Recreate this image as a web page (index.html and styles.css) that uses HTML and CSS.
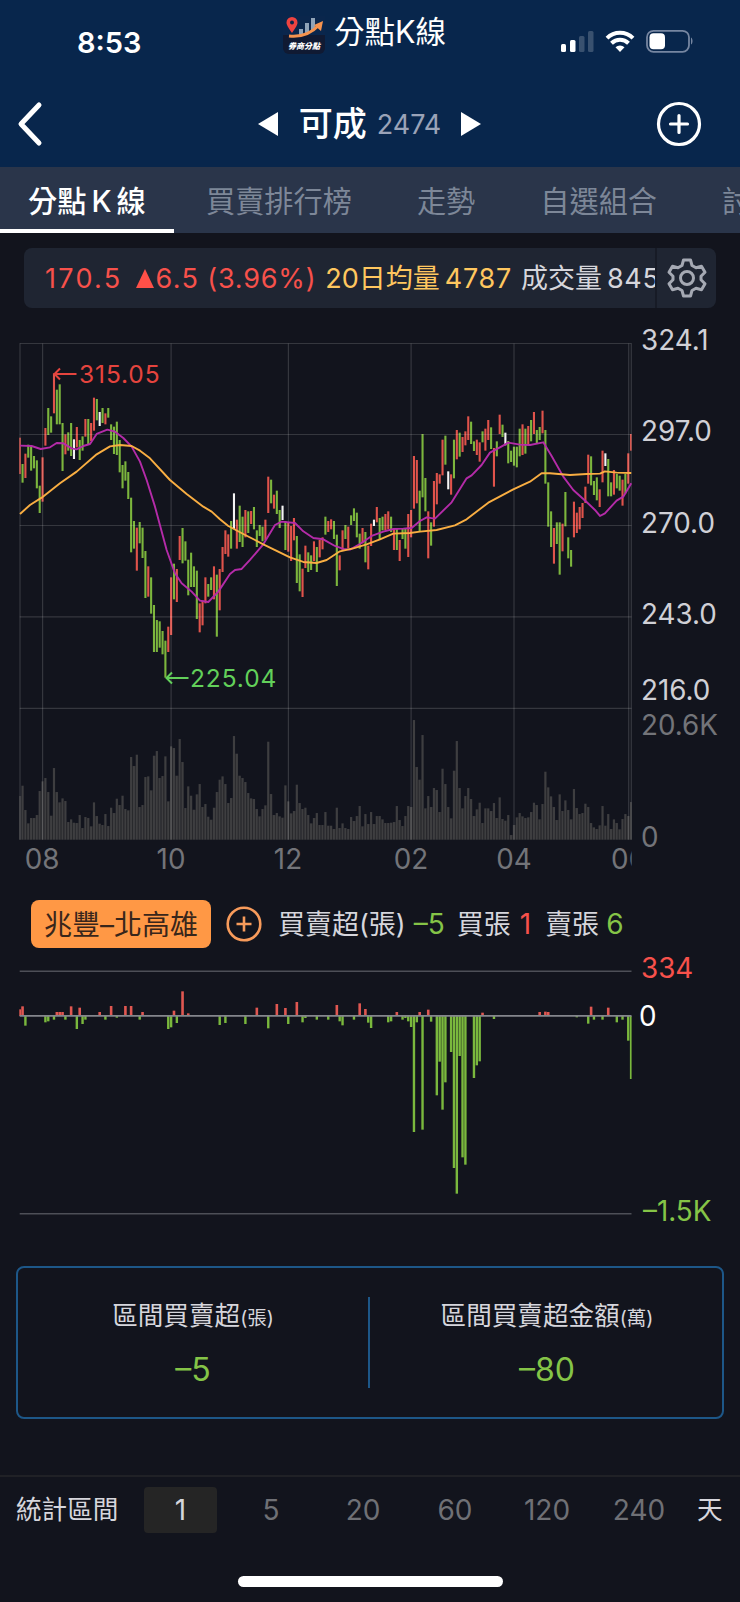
FILE: index.html
```html
<!DOCTYPE html>
<html lang="zh-Hant">
<head>
  <meta charset="UTF-8" />
  <meta name="viewport" content="width=device-width, initial-scale=1.0" />
  <title>分點K線 - 可成 2474</title>
  <link rel="stylesheet" href="styles.css">
</head>
<body>
  <header class="header">
    <div class="status">
      <span class="time">8:53</span>
      <div class="app">
        <svg class="app-icon" width="42" height="38" viewBox="0 0 42 38">
          <rect y="1" width="42" height="37" rx="6" fill="#101a33"/>
          <rect width="42" height="19" fill="#0a264c"/>
          <path d="M16 19v-6h4v6M22 18V7h4v10M28 15V2h4v10" fill="#8fa3b8"/>
          <path d="M9 17C5 11 3.5 9 3.5 6.5a5.5 5.5 0 0 1 11 0C14.5 9 13 11 9 17z" fill="#ee4340"/>
          <circle cx="9" cy="6.5" r="2" fill="#0a264c"/>
          <path d="M6 20Q24 22 36 9" fill="none" stroke="#f6934e" stroke-width="3"/>
          <path d="M31 9l9-4-2 10z" fill="#f6934e"/>
          <text x="21" y="33" class="icon-text">券商分點</text>
        </svg>
        <span class="app-name">分點K線</span>
      </div>
      <svg class="status-icons" width="134" height="26" viewBox="0 0 134 26">
        <g fill="#fff">
          <rect x="1" y="15" width="5" height="8" rx="1.5"/>
          <rect x="10" y="11" width="5.5" height="12" rx="1.5"/>
          <rect x="19" y="7" width="5.5" height="16" rx="1.5" opacity=".2"/>
          <rect x="28" y="2" width="5.5" height="21" rx="1.5" opacity=".2"/>
          <path d="M60 23l-4.5-4.7a6.5 6.5 0 0 1 9 0z"/>
        </g>
        <g fill="none" stroke="#fff" stroke-width="4">
          <path d="M47 9.2a18.5 18.5 0 0 1 26 0M51.5 14.3a12.2 12.2 0 0 1 17 0"/>
        </g>
        <rect x="87" y="1.8" width="42" height="21" rx="6.5" fill="none" stroke="#7686a1" stroke-width="1.8"/>
        <rect x="89.5" y="4.3" width="15.5" height="16" rx="4" fill="#fff"/>
        <path d="M131 8.5c2 1 2 6 0 7z" fill="#7686a1"/>
      </svg>
    </div>
    <div class="nav">
      <svg width="28" height="46" viewBox="0 0 28 46" class="back"><path d="M23 4L5 23l18 19"/></svg>
      <div class="stock">
        <svg width="20" height="24" viewBox="0 0 20 24"><path d="M20 0v24L0 12z" fill="#fff"/></svg>
        <span class="stock-name">可成</span>
        <span class="stock-code">2474</span>
        <svg width="20" height="24" viewBox="0 0 20 24"><path d="M0 0v24l20-12z" fill="#fff"/></svg>
      </div>
      <svg width="46" height="46" viewBox="0 0 46 46" class="add"><circle cx="23" cy="23" r="20.5"/><path d="M23 14.5v17M14.5 23h17"/></svg>
    </div>
  </header>

  <nav class="tabs">
    <span class="tab active">分點<i>K</i>線</span>
    <span class="tab">買賣排行榜</span>
    <span class="tab">走勢</span>
    <span class="tab">自選組合</span>
    <span class="tab">討論</span>
  </nav>

  <div class="quote">
    <div class="quote-text">
      <span class="red price">170.5</span>
      <svg class="up" width="18" height="19" viewBox="0 0 18 19"><path d="M9 0l9 19H0z" fill="#ff5048"/></svg>
      <span class="red change">6.5</span>
      <span class="red percent">(3.96%)</span>
      <span class="yellow average">20日均量</span>
      <span class="yellow average-num">4787</span>
      <span class="deal">成交量</span>
      <span class="deal-num">8451</span>
    </div>
    <div class="gear">
      <svg width="42" height="42" viewBox="-21 -21 42 42">
        <path d="M-3.5-18h7l1.500 5.500 4 2.300 5.500-1.500 3.500 6-4 4v3.400l4 4-3.500 6-5.500-1.500-4 2.300-1.500 5.500h-7l-1.500-5.500-4-2.300-5.500 1.500-3.500-6 4-4v-3.400l-4-4 3.500-6 5.500 1.500 4-2.300z"/>
        <circle r="6.5"/>
      </svg>
    </div>
  </div>

  <svg id="kChart" class="k-chart" width="740" height="550" viewBox="0 330 740 550"></svg>

  <div class="broker">
    <span class="broker-tag">兆豐–北高雄</span>
    <svg class="broker-add" width="36" height="36" viewBox="0 0 36 36"><circle cx="18" cy="18" r="16.3"/><path d="M18 10.5v15M10.5 18h15"/></svg>
    <span class="net">買賣超(張)</span>
    <span class="net-num green">–5</span>
    <span class="buy">買張</span>
    <span class="buy-num red">1</span>
    <span class="sell">賣張</span>
    <span class="sell-num green">6</span>
  </div>

  <svg id="netChart" class="net-chart" width="740" height="290" viewBox="0 950 740 290"></svg>

  <section class="summary">
    <div class="summary-item">
      <p>區間買賣超<small>(張)</small></p>
      <strong>–5</strong>
    </div>
    <div class="summary-item">
      <p>區間買賣超金額<small>(萬)</small></p>
      <strong>–80</strong>
    </div>
  </section>

  <footer class="footer">
    <div class="range">
      <span class="range-label">統計區間</span>
      <span class="day selected">1</span>
      <span class="day">5</span>
      <span class="day">20</span>
      <span class="day">60</span>
      <span class="day">120</span>
      <span class="day">240</span>
      <span class="range-unit">天</span>
    </div>
    <div class="home-bar"></div>
  </footer>

  <script src="chart.js"></script>
</body>
</html>
```
FILE: styles.css
```css
* { box-sizing: border-box; }
body { margin: 0; width: 740px; height: 1602px; overflow: hidden; background: #12141d; color: #d6d6dc; font-family: Inter, "Noto Sans CJK TC", sans-serif; font-size: 27px; line-height: 1; display: flex; flex-direction: column; white-space: nowrap; }
svg { display: block; flex-shrink: 0; }
.red { color: #f7514b; }
.green { color: #85c447; }
.yellow { color: #ffc75f; }

/* header */
.header { height: 167px; flex-shrink: 0; background: #08264c; color: #fff; }
.status { height: 84px; display: flex; align-items: flex-start; }
.time { width: 206px; margin-left: 77px; padding-top: 28px; font-size: 29px; font-weight: 600; }
.app { width: 277px; display: flex; padding-top: 16px; gap: 9px; }
.app-name { font-size: 30.5px; line-height: 32px; }
.icon-text { font-size: 8px; font-weight: 900; font-style: italic; fill: #fff; text-anchor: middle; }
.status-icons { margin-top: 29px; }
.nav { height: 80px; display: flex; align-items: center; justify-content: space-between; padding: 0 38px 0 16px; }
.back, .add { fill: none; stroke: #fff; stroke-width: 5; stroke-linecap: round; stroke-linejoin: round; }
.add { stroke-width: 3.2; }
.stock { display: flex; align-items: center; padding-left: 39px; }
.stock-name { margin-left: 21px; font-size: 34px; font-weight: 500; }
.stock-code { margin: 0 20px 0 10px; font-size: 27px; color: #9aa3b8; }

/* tabs */
.tabs { height: 66px; flex-shrink: 0; display: flex; background: #2a354a; color: #7d8798; font-size: 29.2px; overflow: hidden; }
.tab { padding: 0 33px 0 32px; line-height: 69px; flex-shrink: 0; }
.tab i { font-style: normal; margin: 0 5px; }
.tab.active { width: 174px; padding: 0 0 0 28px; color: #fff; font-weight: 500; border-bottom: 4px solid #fff; }

/* quote bar */
.quote { margin: 15px 24px 0; height: 60px; flex-shrink: 0; display: flex; background: #1f2532; border-radius: 8px; }
.quote-text { width: 633px; padding-left: 21px; display: flex; align-items: center; overflow: hidden; border-right: 2px solid #171b26; letter-spacing: 1px; }
.quote-text span { flex-shrink: 0; }
.price { letter-spacing: 2.3px; }
.up { margin-left: 13px; }
.change { margin-left: 2px; letter-spacing: 1.4px; }
.percent { margin-left: 8px; letter-spacing: 0.8px; }
.average { margin-left: 9px; letter-spacing: 0; }
.average-num { margin-left: 5px; letter-spacing: 0.7px; }
.deal { margin-left: 9px; letter-spacing: 0; }
.deal-num { margin-left: 5px; letter-spacing: 0.7px; }
.gear { flex: 1; display: flex; align-items: center; justify-content: center; }
.gear svg { fill: none; stroke: #a5a9b3; stroke-width: 3; stroke-linejoin: round; }

/* charts */
.k-chart { margin-top: 22px; overflow: visible; }
.axis { font-size: 27.8px; fill: #d0d0d6; }
.axis.dim { fill: #737479; }
.axis.month { fill: #737479; text-anchor: middle; }
.axis.up-label { fill: #f7514b; }
.axis.down-label { fill: #85c447; }
.axis.zero { fill: #fff; }
.mark { font-size: 24.5px; letter-spacing: 0.9px; }
.mark-high { fill: #e5443e; }
.mark-low { fill: #62d05a; }
.arrow-high { fill: none; stroke: #e5443e; stroke-width: 2; }
.arrow-low { fill: none; stroke: #62d05a; stroke-width: 2; }
.grid-line { stroke: #fff; stroke-opacity: 0.15; stroke-width: 1.2; }
.net-line { stroke: #4d4f57; stroke-width: 1.5; }
.zero-line { stroke: #84868c; stroke-width: 1.7; }
.ma { fill: none; stroke-width: 1.9; stroke-linejoin: round; }
.ma-short { stroke: #b42ba8; }
.ma-long { stroke: #f9ae42; }

/* broker row */
.broker { height: 50px; margin-top: 19px; padding-left: 31px; flex-shrink: 0; display: flex; align-items: center; }
.broker-tag { width: 180px; height: 48px; line-height: 50px; text-align: center; font-size: 28px; background: #ff9845; color: #38261b; border-radius: 8px; }
.broker-add { margin-left: 15px; fill: none; stroke: #f79b5b; stroke-width: 2.6; }
.net { margin-left: 16px; }
.net-num { margin-left: 8px; font-size: 28px; }
.buy { margin-left: 12px; }
.buy-num { margin-left: 9px; font-size: 28px; }
.sell { margin-left: 14px; }
.sell-num { margin-left: 7px; font-size: 28px; }

/* summary */
.net-chart { margin-top: 1px; }
.summary { height: 153px; margin: 26px 16px 0; flex-shrink: 0; display: flex; align-items: center; border: 2px solid #1d5788; border-radius: 8px; }
.summary-item { flex: 1; height: 91px; text-align: center; }
.summary-item + .summary-item { border-left: 2px solid #1d5788; padding-left: 2px; }
.summary-item p { margin: 4px 0 21px; font-size: 25.6px; line-height: 30px; }
.summary-item small { font-size: 19.5px; }
.summary-item strong { display: block; font-size: 32px; font-weight: 400; color: #85c447; }

/* footer */
.footer { margin-top: 56px; border-top: 2px solid #202126; }
.range { height: 66px; padding-left: 16px; display: flex; align-items: center; font-size: 25.6px; }
.range-label { width: 119px; }
.day { width: 92px; color: #6f7075; text-align: center; font-size: 28px; }
.day.selected { width: 73px; height: 46px; margin-left: 9px; margin-right: 8px; line-height: 46px; color: #d6d6dc; background: #252525; border-radius: 4px; }
.range-unit { margin-left: 12px; }
.home-bar { width: 265px; height: 11px; margin: 33px auto 0; background: #fff; border-radius: 6px; }
```
FILE: chart.js
```js
// one entry per day: colour (r up, g down, w flat), then top and bottom
// all y values are thirds of a pixel
const candles = [
  'r323-432 g402-458 r371-444 g344-383 g350-422 g378-415 g391-475 g467-549 r382-515 r294-347',
  'g234-315 g259-308 r130-250 g179-283 g163-283 g279-423 r313-373 g307-362 g279-378 w328-387',
  'r291-352 g330-390 g319-362 r267-320 g267-345 r279-333 r203-302 g207-271 w246-288 g234-279',
  'r250-283 g234-263 g283-330 g290-372 g275-375 g330-427 g405-475 g394-452 g426-507 g503-667',
  'g573-656 r593-722 g576-640 g593-684 g663-804 r709-800 g742-851 g825-966 g870-966 g874-953',
  'g903-973 g932-1043 r890-966 r742-915 g701-808 r717-816 r618-690 g594-700 g634-692 g689-796',
  'g668-771 g709-771 g722-867 r820-907 r812-886 r742-820 g762-800 g742-780 r709-808 g734-920',
  'r717-841 r651-726 r601-672 r613-680 g573-656 w490-597 r569-656 g527-636 g560-651 r540-622',
  'g544-609 r543-582 g531-598 g601-651 g585-618 g590-634 r569-630 r440-549 g449-520 r494-536',
  'g482-552 g540-594 w527-570 g573-660 r577-665 r588-693 r564-631 g618-759 g673-784 r716-801',
  'r647-714 g667-726 g676-720 r634-693 g651-726 r630-682 r622-658 g560-614 r573-606 r568-598',
  'g573-627 g614-768 r676-721 r601-660 g585-627 r590-655 g556-585 g535-573 g548-622 g611-656',
  'r594-640 g606-697 r647-718 r581-648 w569-588 r531-577 g564-627 g560-601 r552-601 r544-598',
  'g560-606 r596-660 g596-660 r630-693 g594-627 g594-656 r552-681 r540-622 r378-536 r390-520',
  'g482-606 g312-502 g444-544 r544-685 g577-647 r453-590 r429-523 r433-461 r329-436 g317-404',
  'w424-478 r433-494 g329-445 r300-388 g308-380 r321-366 r304-346 r259-330 g275-342 g334-363',
  'r329-375 r337-395 g304-337 r296-362 r270-330 g292-357 r354-470 g334-379 r254-312 g284-321',
  'w308-346 g333-400 g362-396 g350-407 g350-412 g296-379 r283-375 g296-371 r288-346 g270-334',
  'r246-312 g300-342 g291-330 r242-310 g300-461 g457-590 g544-651 r594-701 g577-642 g577-734',
  'r581-664 g486-589 g622-685 g660-710 r515-622 r548-609 r531-598 r519-564 r470-519 r374-461',
  'g379-466 g453-495 g442-511 r478-531 r362-457 w370-408 g387-499 g457-499 r420-494 g432-475',
  'g437-482 r449-527 g432-490 r370-461 r312-362'
].join(' ').split(' ');

const volumes = [
  131, 162, 89, 49, 65, 65, 74, 146, 175, 185, 143, 72, 215, 143, 112, 124, 116, 53, 61, 51,
  50, 74, 35, 68, 65, 40, 112, 71, 48, 44, 77, 41, 96, 80, 123, 104, 132, 92, 88, 248,
  221, 255, 98, 104, 188, 190, 148, 252, 266, 185, 191, 250, 115, 280, 275, 192, 302, 233, 95, 160,
  132, 90, 136, 167, 98, 107, 69, 60, 96, 143, 180, 190, 167, 110, 125, 311, 258, 192, 185, 173,
  140, 124, 122, 92, 70, 92, 103, 294, 137, 74, 80, 70, 66, 163, 115, 79, 86, 165, 110, 92,
  96, 74, 49, 65, 80, 44, 44, 83, 42, 42, 32, 96, 35, 49, 35, 32, 68, 56, 71, 101,
  40, 77, 47, 83, 47, 71, 71, 61, 50, 50, 51, 53, 101, 59, 41, 71, 101, 98, 359, 218,
  180, 314, 94, 131, 98, 155, 149, 83, 213, 167, 98, 64, 207, 296, 155, 94, 131, 155, 122, 71,
  91, 111, 50, 94, 94, 86, 110, 65, 127, 62, 57, 74, 14, 44, 67, 80, 70, 65, 67, 83,
  111, 104, 61, 107, 204, 157, 130, 98, 59, 136, 86, 118, 89, 61, 152, 95, 77, 80, 108, 98,
  50, 37, 32, 43, 101, 42, 77, 32, 61, 50, 31, 62, 77, 71, 113
];

// [day, net shares], only days with trades
const net = [
  [0, 20], [1, 29], [2, -29], [9, -19], [10, -16], [12, -11], [13, 12], [14, 12], [15, 12], [16, -11],
  [18, 29], [20, -39], [21, 25], [22, -24], [23, -11], [28, 12], [30, -11], [32, 30], [34, -5], [37, 30],
  [39, 30], [42, -11], [43, 12], [52, -39], [53, -34], [54, 16], [55, -21], [57, 74], [59, 8], [70, -27],
  [72, -21], [79, -24], [83, 25], [87, -37], [90, 36], [93, 24], [94, -24], [97, 42], [99, -19], [100, -6],
  [104, -11], [108, -11], [111, 33], [112, -16], [113, -28], [117, -11], [119, 38], [121, 21], [122, -20],
  [123, -36], [129, -19], [130, -16], [132, 12], [134, -11], [135, -6], [136, -16], [137, -33], [138, -348],
  [139, -19], [140, 12], [141, -341], [143, 19], [144, -17], [146, -238], [147, -137], [148, -281],
  [149, -199], [151, -108], [152, -456], [153, -533], [154, -120], [155, -424], [156, -446], [159, -186],
  [160, -148], [161, -136], [162, 10], [166, -9], [182, 12], [184, 13], [185, 12], [195, -4], [199, -23],
  [200, 28], [201, -11], [204, -11], [206, 25], [209, -19], [211, -11], [213, -74], [214, -189]
];

const maShort = '60,347 95,348 122,357 150,352 170,339 190,340 215,355 230,358 250,348 270,342 290,312 322,299 345,305 370,324 395,350 420,395 440,450 465,530 500,660 525,730 545,760 575,785 600,812 625,816 655,785 690,732 705,720 725,717 750,690 790,643 825,585 845,575 885,579 910,604 940,624 970,628 1005,648 1030,657 1050,659 1080,642 1115,618 1150,605 1180,597 1210,596 1235,594 1260,573 1280,562 1305,566 1355,517 1400,445 1415,436 1445,405 1470,368 1500,352 1525,338 1560,344 1590,345 1630,337 1655,378 1690,440 1720,480 1760,516 1785,540 1800,558 1815,550 1850,512 1870,500 1894,460';
const maLong = '60,552 90,525 125,503 180,460 230,425 290,373 330,349 360,345 395,348 420,362 450,385 510,450 560,492 610,530 635,545 660,568 685,588 730,612 790,643 870,682 910,696 950,699 980,690 1020,664 1060,655 1100,643 1140,628 1180,611 1230,609 1260,605 1310,600 1365,586 1400,568 1465,518 1540,478 1590,455 1625,430 1650,430 1710,435 1760,432 1800,431 1815,424 1850,428 1894,429';

const colors = { r: '#e0534b', g: '#7cb63d', w: '#f4f4f4' };
const left = 19.7;
const right = 631.5;
const step = 2.857;

function add(parent, tag, attrs, text) {
  const el = document.createElementNS('http://www.w3.org/2000/svg', tag);
  Object.keys(attrs).forEach(function (key) {
    el.setAttribute(key, attrs[key]);
  });
  if (text) el.textContent = text;
  parent.appendChild(el);
  return el;
}

function addLine(svg, x1, y1, x2, y2, cls) {
  add(svg, 'line', { x1: x1, y1: y1, x2: x2, y2: y2, class: cls });
}

function addBar(svg, i, y, height, width, color) {
  add(svg, 'rect', { x: left + i * step - width / 2, y: y, width: width, height: height, fill: color });
}

function addLabel(svg, x, middle, text, cls) {
  add(svg, 'text', { x: x, y: middle + 10, class: 'axis ' + cls }, text);
}

// group cut off at the plot edges
function addPlot(svg, id, y, height) {
  const clip = add(svg, 'clipPath', { id: id });
  add(clip, 'rect', { x: 19.3, y: y, width: 612.3, height: height });
  return add(svg, 'g', { 'clip-path': 'url(#' + id + ')' });
}

function drawKChart() {
  const svg = document.getElementById('kChart');
  const plot = addPlot(svg, 'kClip', 330, 550);
  const bottom = 839.7;

  volumes.forEach(function (v, i) {
    const height = v / 3;
    addBar(plot, i, bottom - height, height, 2.2, '#3e3e40');
    if (i + 1 < volumes.length) {
      const low = Math.min(v, volumes[i + 1]) / 3;
      addBar(plot, i + 0.5, bottom - low, low, 0.9, '#29292c');
    }
  });

  candles.forEach(function (c, i) {
    const range = c.slice(1).split('-').map(Number);
    addBar(plot, i, 330 + range[0] / 3, (range[1] - range[0]) / 3, 2.1, colors[c[0]]);
  });

  [343.5, 434.5, 525.5, 616.8, 708.4].forEach(function (y) {
    addLine(svg, left, y, right, y, 'grid-line');
  });
  [20, 42.6, 171.1, 288.4, 411.1, 514, 628.7, 631.3].forEach(function (x) {
    addLine(svg, x, 343.5, x, bottom, 'grid-line');
  });

  const averages = add(svg, 'g', { transform: 'translate(0 330) scale(0.3333)' });
  add(averages, 'polyline', { points: maShort, class: 'ma ma-short', 'vector-effect': 'non-scaling-stroke' });
  add(averages, 'polyline', { points: maLong, class: 'ma ma-long', 'vector-effect': 'non-scaling-stroke' });

  add(svg, 'path', { d: 'M76.5 374H54.5M60 368.5L54.5 374L60 379.5', class: 'arrow-high' });
  add(svg, 'text', { x: 79, y: 383, class: 'mark mark-high' }, '315.05');
  add(svg, 'path', { d: 'M188.5 678H166.5M172 672.5L166.5 678L172 683.5', class: 'arrow-low' });
  add(svg, 'text', { x: 190, y: 687, class: 'mark mark-low' }, '225.04');

  addLabel(svg, 641, 340, '324.1', '');
  addLabel(svg, 641, 431, '297.0', '');
  addLabel(svg, 641, 523, '270.0', '');
  addLabel(svg, 641, 614, '243.0', '');
  addLabel(svg, 641, 690, '216.0', '');
  addLabel(svg, 641, 725, '20.6K', 'dim');
  addLabel(svg, 641, 837, '0', 'dim');

  addLabel(plot, 42, 859, '08', 'month');
  addLabel(plot, 171, 859, '10', 'month');
  addLabel(plot, 288, 859, '12', 'month');
  addLabel(plot, 411, 859, '02', 'month');
  addLabel(plot, 514, 859, '04', 'month');
  addLabel(plot, 628.5, 859, '06', 'month');
}

function drawNetChart() {
  const svg = document.getElementById('netChart');
  addLine(svg, left, 971.3, right, 971.3, 'net-line');
  addLine(svg, left, 1213.8, right, 1213.8, 'net-line');

  const plot = addPlot(svg, 'netClip', 950, 290);
  net.forEach(function (item) {
    const height = Math.abs(item[1]) / 3;
    if (item[1] > 0) {
      addBar(plot, item[0], 1016 - height, height, 2.6, '#e05751');
    } else {
      addBar(plot, item[0], 1016, height, 2.4, '#7ab83d');
    }
  });

  addLine(svg, left, 1015.8, right, 1015.8, 'zero-line');
  addLabel(svg, 641, 968, '334', 'up-label');
  addLabel(svg, 639, 1016, '0', 'zero');
  addLabel(svg, 643, 1211, '–1.5K', 'down-label');
}

drawKChart();
drawNetChart();
```
